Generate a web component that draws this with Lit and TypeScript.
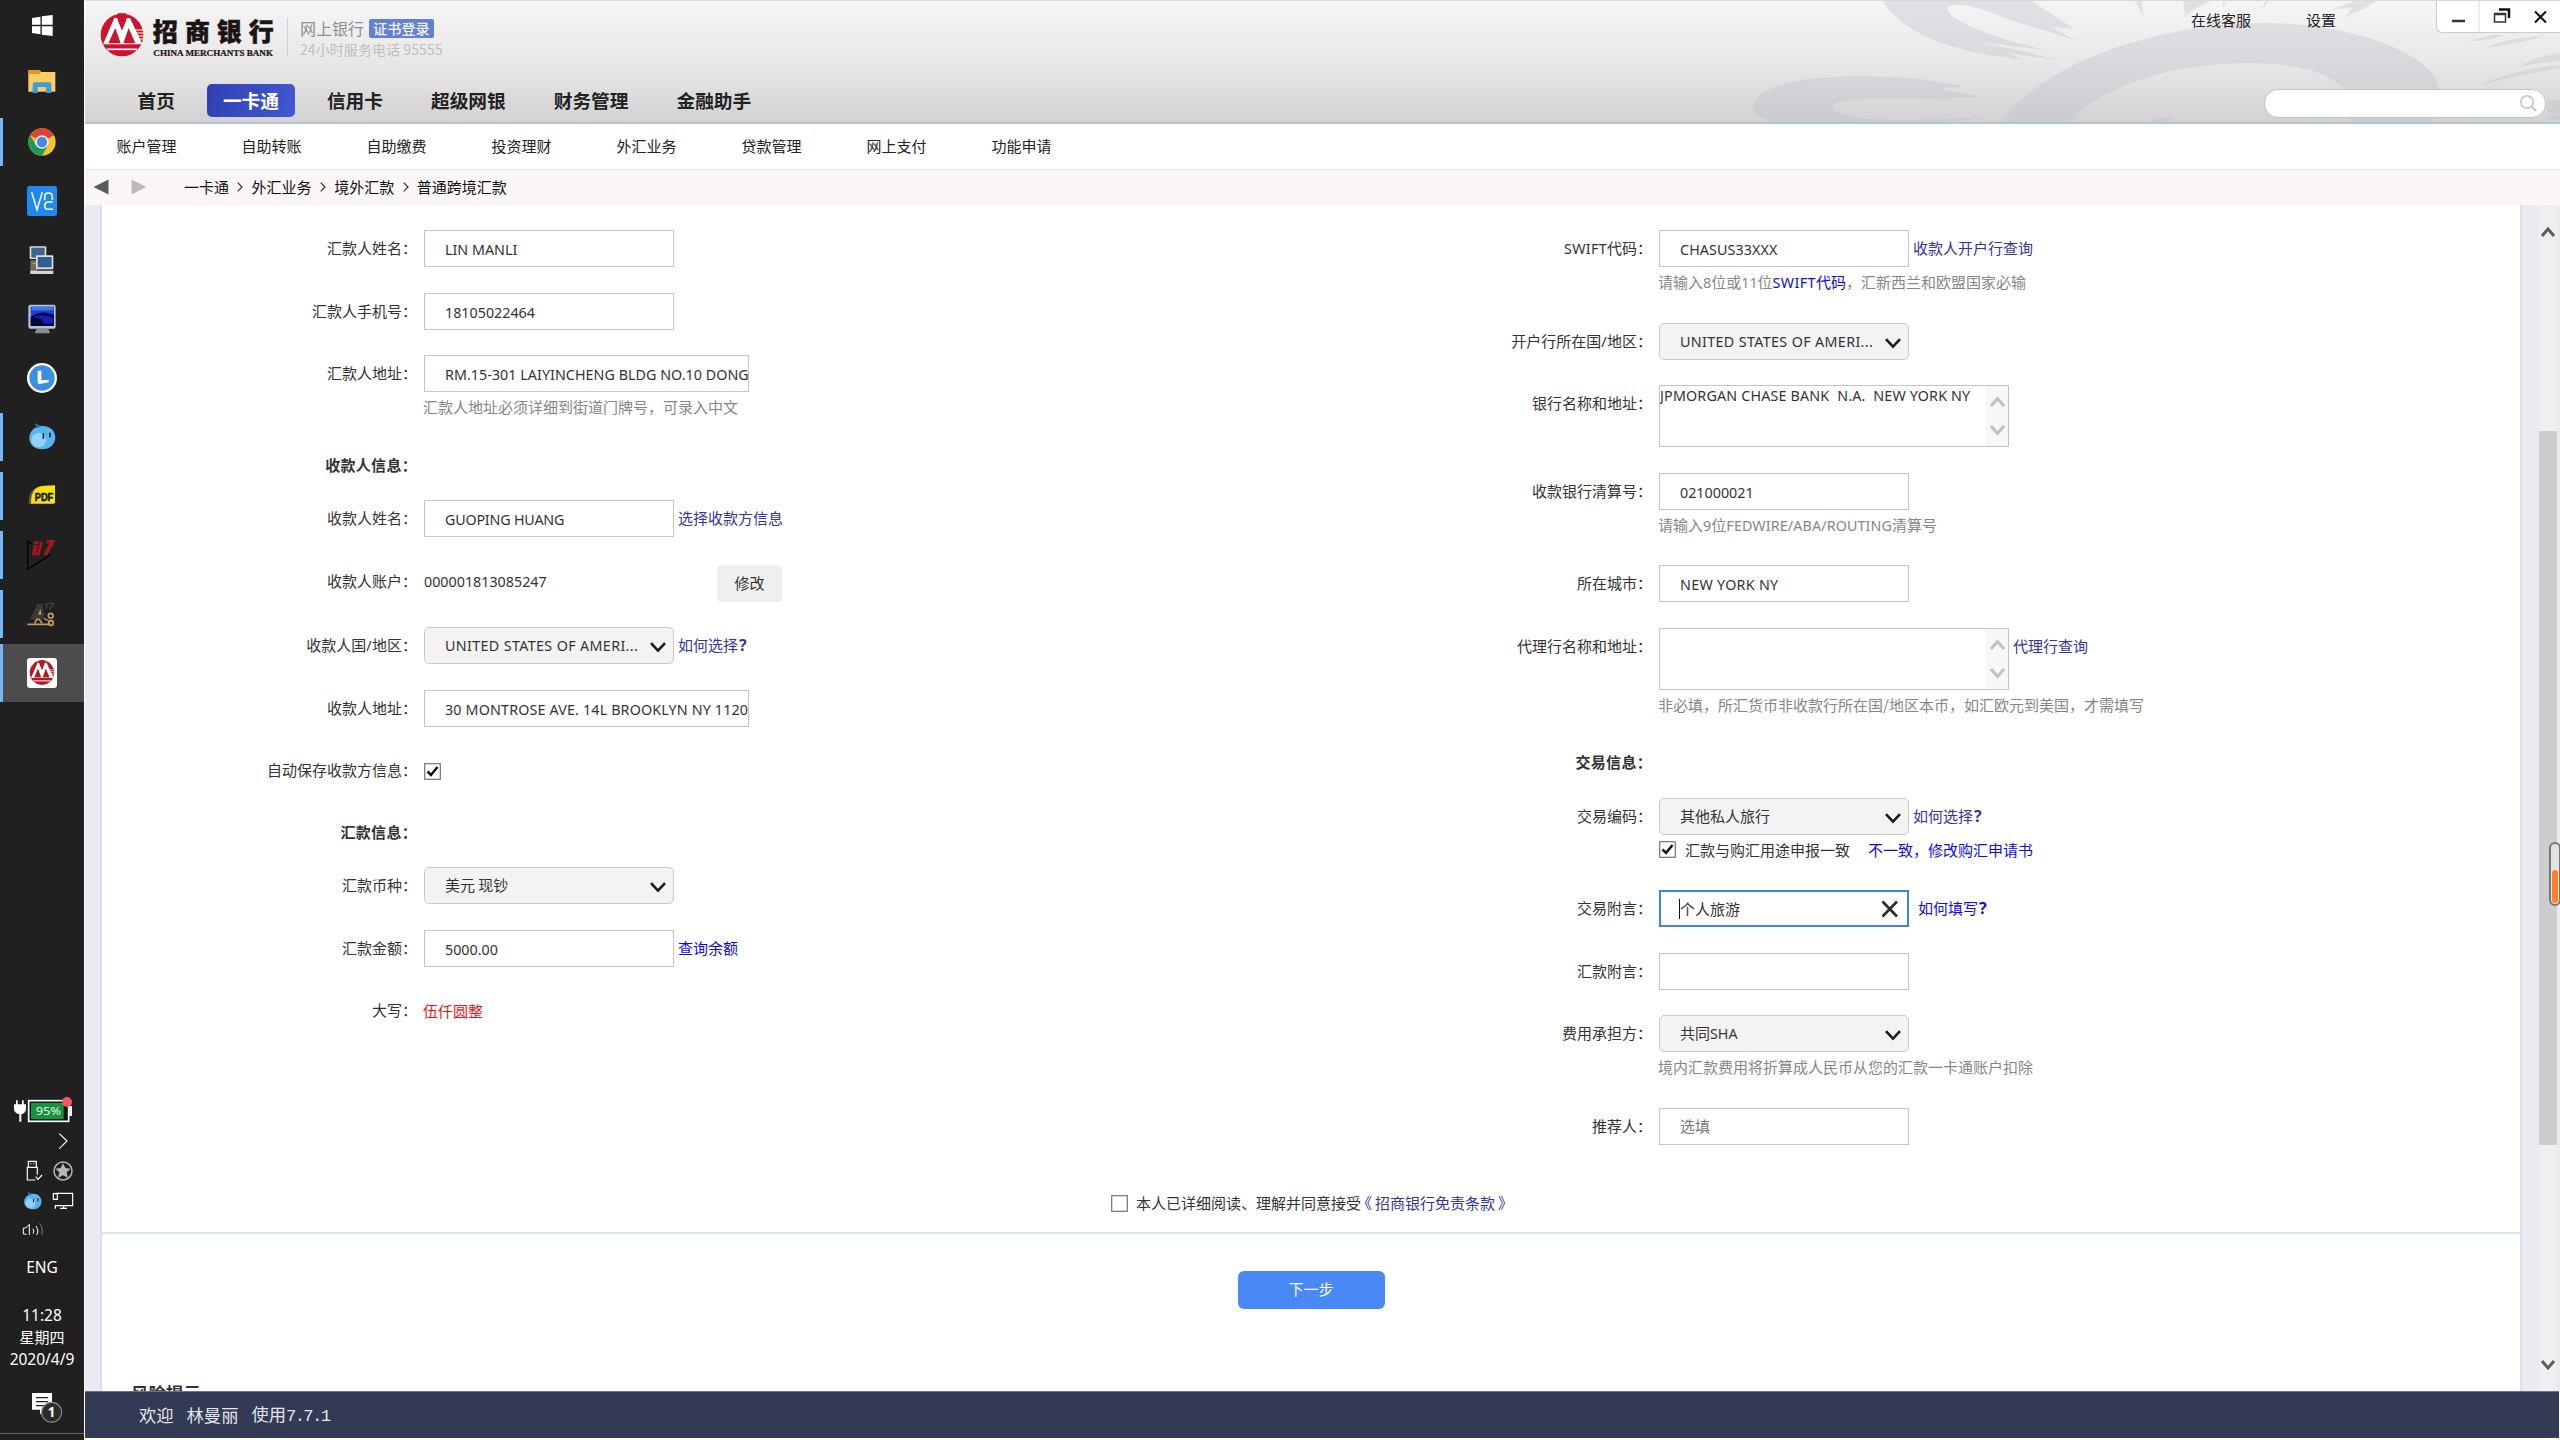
import { LitElement, html, svg, css, nothing } from "lit";
import { customElement, property } from "lit/decorators.js";
import { classMap } from "lit/directives/class-map.js";
import { styleMap } from "lit/directives/style-map.js";

const CJK = css`"Noto Sans CJK SC", sans-serif`;

/* Latin runs are set in a narrower face than the ideographs around them. */
const mix = (text: string, track = 0) =>
  text
    .split(/([\x21-\x7e][\x20-\x7e]*)/)
    .filter((t) => t)
    .map((t) =>
      /^[\x21-\x7e]/.test(t)
        ? html`<span class=${classMap({ lat: true, ask: t === "?" })} style=${styleMap({ letterSpacing: `${track}px` })}>${t}</span>`
        : t
    );

const mixCss = css`
  .lat {
    font-family: "Noto Sans", "Noto Sans CJK SC", sans-serif;
    font-size: 14.3px;
    white-space: pre;
  }
  .ask { font-weight: 700; font-size: 16px; margin-left: 1px; }
`;

const bankMark = (color: string) => svg`
  <circle cx="365" cy="105" r="64" fill=${color}></circle>
  <path d="M308 133 L342 54 L351 54 L365 88 L379 54 L389 54 L426 133 Z" fill="#fff"></path>
  <path d="M324 130 L345 84 L361 130 Z M369 130 L385 84 L405 130 Z" fill=${color}></path>
  <path d="M352 60 L365 92 L378 60 L378 40 L352 40 Z" fill=${color}></path>
  <path d="M320 148 H410" stroke="#fff" stroke-width="5"></path>
  <path d="M402 90 H430 M406 99 H431 M410 108 H431 M414 117 H430" stroke="#fff" stroke-width="3"></path>`;

const genie = svg`
  <path d="M105 250 C112 256 120 258 128 258 C152 258 166 274 166 292 C166 314 148 328 127 328 C104 328 88 314 88 294 C88 280 96 268 110 262 Z" fill="#5bb4ee"></path>
  <ellipse cx="116" cy="300" rx="22" ry="22" fill="#a5dcfa" opacity=".75"></ellipse>
  <path d="M105 250 C112 256 120 258 128 258 L110 264 Z" fill="#2a67b8"></path>
  <path d="M130 280 v16 M150 278 v14" stroke="#14284e" stroke-width="5"></path>`;

type Cell = { name: string; running?: boolean; active?: boolean; box: string; art: unknown };

/* Icon drawings share a 3x grid with the task bar cells. */
const TASKS: Cell[] = [
  { name: "explorer", box: "81 207 90 90", art: svg`
      <path d="M85 213 H119 L124 219 H166 V278 H85 Z" fill="#f9ce62"></path>
      <path d="M85 213 H119 L124 219 L119 225 H85 Z" fill="#dd9a1e"></path>
      <path d="M98 282 V256 Q98 250 104 250 H148 Q154 250 154 256 V282 H138 V264 H113 V282 Z" fill="#3f9bd8"></path>` },
  { name: "chrome", running: true, box: "81 381 90 90", art: svg`
      <circle cx="126" cy="426" r="41" fill="#fbc12e"></circle>
      <path d="M126 426 L90.500 405.500 A41 41 0 0 1 161.500 405.500 Z" fill="#dc4437"></path>
      <path d="M126 385 A41 41 0 0 1 161.500 405.500 H126 Z" fill="#dc4437"></path>
      <path d="M90.500 405.500 A41 41 0 0 0 126 467 L144 436 L108 436 Z" fill="#1a9b57"></path>
      <circle cx="126" cy="426" r="20" fill="#f4f4f4"></circle>
      <circle cx="126" cy="426" r="15.500" fill="#4a86ea"></circle>` },
  { name: "vnc", box: "81 558 90 90", art: svg`
      <rect x="81" y="558" width="90" height="90" rx="8" fill="#2088ee"></rect>
      <path d="M95 577 L111 629 L127 577 M134 601 V590 Q134 579 145 579 Q157 579 157 590 V600 M159 606 H146 Q134 606 134 617 Q134 628 146 628 H159" fill="none" stroke="#fff" stroke-width="4.500"></path>` },
  { name: "putty", box: "81 733 90 90", art: svg`
      <rect x="89" y="737" width="50" height="38" rx="3" fill="#dfe1dd"></rect>
      <rect x="94" y="741" width="40" height="30" fill="#3d6590"></rect>
      <path d="M91 779 H112 V818 H91 Z" fill="#6f6e59"></path>
      <rect x="108" y="764" width="52" height="42" rx="3" fill="#dfe1dd"></rect>
      <rect x="113" y="769" width="42" height="31" fill="#315e94"></rect>
      <path d="M91 810 H160 V820 H91 Z" fill="#d5d6ce"></path>
      <path d="M98 788 H106" stroke="#c8c27a" stroke-width="3"></path>` },
  { name: "remote", box: "81 911 90 90", art: svg`
      <rect x="85" y="913" width="82" height="72" rx="6" fill="#b9c0cf"></rect>
      <rect x="92" y="919" width="70" height="58" fill="#1f3fd6"></rect>
      <path d="M92 950 Q125 926 162 944 V977 H92 Z" fill="#06083c"></path>
      <path d="M100 950 Q126 938 160 952 V970 H132 L124 956 Z" fill="#1621b0"></path>
      <path d="M95 919 H160 V930 H95 Z" fill="#3f78f0"></path>
      <path d="M110 985 H145 L150 999 H104 Z" fill="#8c8f86"></path>` },
  { name: "lark", box: "81 69 90 90", art: svg`
      <circle cx="126" cy="114" r="45" fill="#fff"></circle>
      <circle cx="126" cy="114" r="38" fill="#3a8fe0"></circle>
      <path d="M113 92 H124 V121 L146 120 V127 L119 132 Q113 132 113 126 Z" fill="#fff"></path>` },
  { name: "genie", running: true, box: "81 246 90 90", art: genie },
  { name: "pdf", running: true, box: "81 424 90 90", art: svg`
      <path d="M86 492 Q84 452 118 439 L126 440 Q94 456 93 492 Z" fill="#5c5c5c"></path>
      <path d="M93 492 Q92 440 132 438 L165 437 V488 Q165 492 160 492 Z" fill="#f8e108"></path>
      <text x="104" y="484" font-family="Liberation Sans" font-weight="bold" font-size="34" textLength="56" lengthAdjust="spacingAndGlyphs" fill="#14140c" stroke="#14140c" stroke-width="1.500">PDF</text>` },
  { name: "cadence", running: true, box: "81 600 90 90", art: svg`
      <path d="M83 602 V688 L152 644" fill="none" stroke="#000" stroke-width="4"></path>
      <path d="M83 602 L95 612" stroke="#000" stroke-width="4"></path>
      <path d="M104 604 h14 l-3 8 h-14 Z M101 616 h13 l-6 22 h8 l-2 8 h-18 Z" fill="#a5161a"></path>
      <path d="M120 606 H129 L118 646 H110 Z M142 600 H166 L156 620 L142 645 H130 L148 610 H138 Z" fill="#a5161a"></path>` },
  { name: "solder", running: true, box: "81 777 90 90", art: svg`
      <path d="M90 838 L112 792 H128 L134 838 Z" fill="#3b3b3c"></path>
      <path d="M134 792 l8 0 l-4 14 M146 790 h16 l-14 18" stroke="#414141" fill="none" stroke-width="4"></path>
      <path d="M121 806 L115 824 H124 Z" fill="#c9a869"></path>
      <path d="M82 853 H152 M104 850 L110 838 H118 L126 850" stroke="#b99a5e" stroke-width="5" fill="none"></path>
      <circle cx="152" cy="827" r="7" fill="none" stroke="#c0a062" stroke-width="5"></circle>
      <circle cx="153" cy="849" r="7" fill="none" stroke="#c0a062" stroke-width="5"></circle>
      <path d="M132 836 L146 842" stroke="#b99a5e" stroke-width="4"></path>` },
  { name: "cmb", running: true, active: true, box: "81 954 90 90", art: svg`
      <rect x="81" y="954" width="90" height="90" rx="9" fill="#fff"></rect>
      <g transform="translate(-84 937.500) scale(.575)">${bankMark("#b01c22")}</g>` },
];

@customElement("task-bar")
export class TaskBar extends LitElement {
  static styles = css`
    :host { display: flex; flex-direction: column; width: 84px; height: 1440px; background: #202020; color: #fff; }
    .start { height: 54px; display: flex; justify-content: center; padding-top: 15px; box-sizing: border-box; }
    .cell { height: 59px; box-sizing: border-box; display: flex; align-items: center; justify-content: center; border-left: 3px solid transparent; padding-right: 3px; padding-bottom: 2px; }
    .cell.running { border-image: linear-gradient(transparent 5px, #74b7f2 5px, #74b7f2 53px, transparent 53px) 0 0 0 3; }
    .cell.active { background: #4c4c4c; border-image: none; border-left-color: #74b7f2; height: 58px; padding-bottom: 0; }
    .tray { margin-top: 393px; }
    svg { display: block; flex: none; }
    .lang { margin-top: 21px; text-align: center; font: 15.5px/22px "Noto Sans", sans-serif; }
    .clock { margin-top: 26px; text-align: center; font: 15.5px/22px "Noto Sans", "Noto Sans CJK SC", sans-serif; }
    .clock div { height: 22px; line-height: 22px; }
    .clock .day { font-family: ${CJK}; font-size: 15px; }
    .note { margin-top: 22px; }
    .edge { margin-top: 7px; border-top: 1px solid #6a6a6a; }
  `;
  render() {
    return html`
      <div class="start">
        <svg width="21" height="21" viewBox="0 0 62 62"><path d="M0 9 L25 5 V29 H0 Z M29 4 L61 0 V29 H29 Z M0 33 H25 V57 L0 53 Z M29 33 H61 V62 L29 58 Z" fill="#fff"></path></svg>
      </div>
      ${TASKS.map((t) => html`
        <div class=${classMap({ cell: true, running: !!t.running, active: !!t.active })}>
          <svg width="30" height="30" viewBox=${t.box}>${t.art}</svg>
        </div>`)}
      <svg class="tray" width="84" height="140" viewBox="0 45 252 420">
        <path d="M48 61 h5 v12 h13 v-12 h5 v12 h7 v14 q0 12 -14 16 v22 h-6 v-22 q-16 -4 -16 -16 v-14 h6 Z" fill="#fff"></path>
        <rect x="86" y="62" width="120" height="62" fill="#0c1a10" stroke="#fff" stroke-width="5"></rect>
        <rect x="93" y="69" width="98" height="48" fill="#16933e"></rect>
        <rect x="208" y="78" width="8" height="30" fill="#fff"></rect>
        <text x="107" y="105" font-family="Noto Sans" font-size="34" textLength="76" lengthAdjust="spacingAndGlyphs" fill="#e9f4ea">95%</text>
        <circle cx="201" cy="66" r="15" fill="#f0585d"></circle>
        <g fill="none" stroke="#fff" stroke-width="3.500">
          <path d="M178 161 L201 183 L178 206"></path>
          <path d="M85 262 V244 H109 V262 M106 300 H82 V262 H112 V284 M91 251 h3 M100 251 h3 M107 290 L114 298 L126 285"></path>
          <path d="M166 340 H218 V377 H166 V386 M160 341 H172 V358 H160 Z M191 378 V384 M180 385 H201"></path>
        </g>
        <g fill="none" stroke="#fff" stroke-width="3">
          <path d="M70 444 H77 L88 433 V473 L77 462 H70 Z M99 446 Q104 453 99 461 M108 438 Q119 453 108 469"></path>
          <path d="M119 430 Q135 453 119 479" stroke="#777"></path>
        </g>
        <circle cx="189" cy="273" r="27" fill="none" stroke="#b5b5b5" stroke-width="4.500"></circle>
        <path d="M189 249 L196 264 L212 266 L200 277 L204 294 L189 286 L174 294 L178 277 L166 266 L182 264 Z" fill="#b5b5b5"></path>
        <g transform="translate(14 170) scale(.665)">${genie}</g>
      </svg>
      <div class="lang">ENG</div>
      <div class="clock"><div>11:28</div><div class="day">星期四</div><div>2020/4/9</div></div>
      <svg class="note" width="84" height="34" viewBox="0 939 252 102">
        <path d="M96 942 H156 V992 H137 L120 1006 V992 H96 Z" fill="#fff"></path>
        <path d="M108 956 H144 M108 968 H144 M108 980 H132" stroke="#202020" stroke-width="3.500"></path>
        <circle cx="155" cy="1000" r="30" fill="#2b2b2b" stroke="#8d8d8d" stroke-width="3.500"></circle>
        <text x="155" y="1014" text-anchor="middle" font-family="Noto Sans" font-weight="bold" font-size="40" fill="#fff">1</text>
      </svg>
      <div class="edge"></div>`;
  }
}

@customElement("bank-header")
export class BankHeader extends LitElement {
  static styles = css`
    :host { display: block; font: 15px/20px ${CJK}; color: #222; }
    .top { position: relative; height: 124px; box-sizing: border-box; border-top: 1px solid #d9d9d9; border-bottom: 2px solid #b4c3d0; background: linear-gradient(#f5f5f5, #e8e8e8 50%, #d2d2d2); overflow: hidden; display: flex; flex-direction: column; }
    .art { position: absolute; right: 0; top: 0; }
    .brandrow { display: flex; height: 70px; position: relative; }
    .logo { margin: 11px 0 0 15px; flex: none; }
    .rule { width: 1px; height: 39px; margin: 17px 12px 0 12px; background: #d2d2d2; }
    .brand { padding-top: 17px; display: flex; flex-direction: column; color: #8f8f8f; font-size: 16px; }
    .line { display: flex; align-items: center; height: 20px; gap: 5px; white-space: nowrap; }
    .badge { height: 19px; line-height: 18px; padding: 0 4px; background: #6381d3; color: #f2f5fc; font-size: 14.200px; font-weight: 500; border-radius: 2px; }
    .phone { color: #bebebe; font-size: 14.100px; line-height: 22px; height: 22px; white-space: nowrap; }
    .tools { margin-left: auto; display: flex; }
    .tool { margin-top: 9px; width: 60px; margin-right: 55px; white-space: nowrap; }
    .tool.set { width: 30px; margin-right: 100px; }
    .win { height: 32px; width: 124px; box-sizing: border-box; background: #fff; border: 1px solid #ccc; border-top: 0; border-right: 0; border-radius: 0 0 0 6px; }
    .mainrow { display: flex; align-items: center; position: relative; height: 50px; padding: 9px 0 0 36.500px; box-sizing: border-box; }
    .nav { display: flex; gap: 16px; height: 33px; }
    .item { padding: 0 16px; height: 33px; line-height: 31px; font-size: 18.700px; font-weight: 700; border-radius: 5px; white-space: nowrap; }
    .item.on { color: #fff; background: linear-gradient(100deg, #3240b5, #4058cf); }
    .search { margin: 5px 14px 0 auto; width: 282px; height: 29px; box-sizing: border-box; background: #fff; border: 1px solid #c3c3c5; border-radius: 14px; display: flex; align-items: center; justify-content: flex-end; padding-right: 7px; }
    .sub { height: 45px; box-sizing: border-box; padding-bottom: 2px; background: #fff; display: grid; grid-template-columns: repeat(8, 125px); padding-left: 31.500px; align-items: center; }
    .crumbs { height: 36px; box-sizing: border-box; border-top: 1px solid #ebe3e2; background: #faf6f5; display: flex; align-items: center; color: #111; padding: 0 0 1px 8px; white-space: nowrap; }
    .arrow { flex: none; margin-right: 22px; }
    .arrow.next { margin-right: 37px; }
    .sep { width: 22.600px; flex: none; display: flex; justify-content: center; }
  `;
  render() {
    const nav = ["首页", "一卡通", "信用卡", "超级网银", "财务管理", "金融助手"];
    const sub = ["账户管理", "自助转账", "自助缴费", "投资理财", "外汇业务", "贷款管理", "网上支付", "功能申请"];
    const crumbs = ["一卡通", "外汇业务", "境外汇款", "普通跨境汇款"];
    return html`
      <div class="top">
        <svg class="art" width="840" height="122" viewBox="0 0 1568 366" preserveAspectRatio="none">
          <g fill="#b9bfcb" fill-opacity=".36">
            <path d="M303 0 C330 70 400 150 565 175 L535 155 L628 178 L570 152 L480 122 L610 148 C530 120 420 60 425 20 C432 0 480 15 530 50 C570 75 620 90 668 122 L620 78 L661 83 L582 0 Z"></path>
            <path d="M61 320 C66 250 160 226 270 226 C350 228 410 240 455 258 L410 262 L487 288 L425 290 L430 297 C330 290 230 290 212 308 C196 335 240 355 330 357 C400 358 450 350 490 350 C440 362 400 364 360 368 L110 368 C80 355 62 340 61 320 Z"></path>
            <path d="M525 368 C600 180 830 66 1010 66 C1200 66 1338 170 1342 266 L1330 368 L1180 368 L1165 262 C1130 205 1060 186 985 186 C820 190 700 270 648 368 Z"></path>
            <path d="M797 368 Q820 348 843 350 L835 368 Z"></path>
            <path d="M775 0 L790 45 L787 0 Z M865 0 L868 50 C875 30 890 22 915 0 Z M940 0 L937 20 L945 5 Z M1018 0 L1012 26 L1024 0 Z"></path>
            <path d="M1185 0 L1140 26 L1180 20 L1165 52 C1180 35 1205 25 1225 0 Z"></path>
            <path d="M1395 122 L1440 102 L1465 102 Q1430 120 1395 122 Z M1430 139 Q1470 112 1535 106 Q1490 130 1430 139 Z M1490 197 Q1520 170 1568 156 V180 Q1530 184 1490 197 Z M1415 254 Q1480 205 1568 191 V202 Q1500 218 1415 254 Z M1545 296 H1568 V338 L1545 332 Z M1545 348 L1568 342 V356 L1545 354 Z"></path>
          </g>
        </svg>
        <div class="brandrow">
          <svg class="logo" width="175" height="50" viewBox="299 36 525 150">
            ${bankMark("#c9152e")}
            <text x="457 554 649 745" y="123" font-family="Noto Sans CJK SC" font-weight="900" font-size="75" fill="#1c1414" stroke="#1c1414" stroke-width="1.500">招商银行</text>
            <text x="459" y="167" font-family="Liberation Serif" font-weight="bold" font-size="25" textLength="359" lengthAdjust="spacingAndGlyphs" fill="#1c1414" stroke="#1c1414" stroke-width=".6">CHINA MERCHANTS BANK</text>
          </svg>
          <div class="rule"></div>
          <div class="brand">
            <div class="line">网上银行<span class="badge">证书登录</span></div>
            <div class="phone">24小时服务电话 95555</div>
          </div>
          <div class="tools">
            <div class="tool">在线客服</div>
            <div class="tool set">设置</div>
            <svg class="win" viewBox="0 0 123 31">
              <path d="M42 0 V31" stroke="#ddd"></path>
              <path d="M15 20 H28" stroke="#333" stroke-width="2.500"></path>
              <path d="M57.500 12.500 H68.500 V21 H57.500 Z M57 13.500 H69" fill="none" stroke="#333" stroke-width="1.500"></path>
              <path d="M62 8.500 H72 V17" fill="none" stroke="#111" stroke-width="2.500"></path>
              <path d="M98 10.500 L109 21.500 M109 10.500 L98 21.500" stroke="#111" stroke-width="2"></path>
            </svg>
          </div>
        </div>
        <div class="mainrow">
          <div class="nav">${nav.map((n, i) => html`<div class=${classMap({ item: true, on: i === 1 })}>${n}</div>`)}</div>
          <div class="search">
            <svg width="20" height="20" viewBox="0 0 20 20"><circle cx="9" cy="9" r="6.200" fill="none" stroke="#c4c4c4" stroke-width="1.600"></circle><path d="M13.500 13.500 L18 18" stroke="#c4c4c4" stroke-width="2"></path></svg>
          </div>
        </div>
      </div>
      <div class="sub">${sub.map((s) => html`<div>${s}</div>`)}</div>
      <div class="crumbs">
        <svg class="arrow" width="16" height="16" viewBox="0 0 16 16"><path d="M15.500 .5 V15.500 L.5 8 Z" fill="#5a5a5a"></path></svg>
        <svg class="arrow next" width="16" height="16" viewBox="0 0 16 16"><path d="M.5 .5 V15.500 L15.500 8 Z" fill="#bdbab9"></path></svg>
        ${crumbs.map((c, i) => html`${i ? html`<span class="sep"><svg width="6" height="10" viewBox="0 0 6 10"><path d="M.7 .7 L5 5 L.7 9.300" fill="none" stroke="#333" stroke-width="1.200"></path></svg></span>` : nothing}<span>${c}</span>`)}
      </div>`;
  }
}

type Field = {
  label: string;
  kind: "input" | "select" | "area" | "text" | "check" | "head" | "amount";
  value?: string;
  track?: number;
  wide?: boolean;
  focus?: boolean;
  ghost?: boolean;
  link?: string;
  bright?: boolean;
  button?: string;
  hint?: unknown;
};

const tick = (on: boolean) => html`<svg class="tickmark" width="17" height="17" viewBox="0 0 17 17">
  <rect x=".75" y=".75" width="15.500" height="15.500" fill="#fff" stroke="#555"></rect>
  ${on ? svg`<path d="M3.500 8.500 L7 12 L13.500 4" fill="none" stroke="#111" stroke-width="2.500"></path>` : nothing}
</svg>`;

@customElement("form-row")
export class FormRow extends LitElement {
  @property({ attribute: false }) field!: Field;
  static styles = [mixCss, css`
    :host { display: block; font: 15px/20px ${CJK}; color: #333; }
    .tickmark { display: block; flex: none; }
    .row { display: flex; height: 62.500px; }
    .row.hinted { height: 92.500px; }
    .row.area { height: 87.500px; }
    .row.area.hinted { height: 117.500px; }
    .row.text { height: 64.500px; }
    .row.head { height: 52.500px; }
    .label { width: 315px; flex: none; padding-right: 7px; line-height: 35px; text-align: right; white-space: nowrap; }
    .head .label { font-weight: 700; letter-spacing: .3px; line-height: 34px; }
    .line { display: flex; }
    .box { width: 250px; height: 37px; box-sizing: border-box; border: 1px solid #c5c5c5; background: #fff; padding: 0 0 0 20px; line-height: 36px; overflow: hidden; white-space: nowrap; display: flex; flex: none; }
    .box.wide { width: 325px; }
    .box.dropdown { background: #f3f3f3; border-radius: 5px; border-color: #c9c9c9; justify-content: space-between; padding-right: 7px; line-height: 34px; }
    .dropdown svg { margin-top: 14px; }
    .box.focus { border: 2px solid #3c86e2; padding: 0 8px 0 18px; justify-content: space-between; }
    .focus .val { border-left: 1px solid #111; height: 20px; line-height: 19px; margin-top: 7px; }
    .focus svg { margin-top: 8px; }
    .box.ghost { color: #777; line-height: 34px; }
    .box.areabox { width: 350px; height: 62px; line-height: 18px; padding: 0; justify-content: space-between; }
    .rail { width: 22px; background: #f7f7f7; display: flex; flex-direction: column; align-items: center; justify-content: space-between; padding: 10px 0 10px; box-sizing: border-box; }
    .link { margin-left: 4px; line-height: 35px; color: #2f36a2; white-space: nowrap; }
    .link.bright { color: #0c0ce6; }
    .focus + .link { margin-left: 9px; }
    .hint { color: #868686; line-height: 20px; margin: 5px 0 0 -1px; white-space: nowrap; display: flex; align-items: center; }
    .hint .declare { margin-left: 9px; color: #333; }
    .hint .revise { margin-left: 18px; }
    .hint .revise, .hint .term { color: #0c0ce6; }
    .hint .tickmark { margin-left: 1px; }
    .plain { line-height: 36px; width: 293px; }
    .red { color: #ee1111; line-height: 37px; margin-left: -1px; }
    .btn { width: 65px; height: 37px; line-height: 35px; background: #efefef; border-radius: 4px; text-align: center; margin-top: 2px; }
    .tick { margin-top: 11px; }
  `];

  private control(f: Field) {
    const value = mix(f.value ?? "", f.track);
    switch (f.kind) {
      case "input":
        return html`<div class=${classMap({ box: true, wide: !!f.wide, focus: !!f.focus, ghost: !!f.ghost })}>
          <span class="val">${value}</span>
          ${f.focus ? html`<svg width="18" height="18" viewBox="0 0 18 18"><path d="M1.500 1.500 L16 16.500 M16 1.500 L1.500 16.500" stroke="#2c2c2c" stroke-width="2.600"></path></svg>` : nothing}
        </div>`;
      case "select":
        return html`<div class="box dropdown"><span class="val">${value}</span>
          <svg width="16" height="11" viewBox="0 0 16 11"><path d="M1 1.200 L8 8.600 L15 1.200" fill="none" stroke="#1c1c1c" stroke-width="2.600"></path></svg></div>`;
      case "area":
        return html`<div class="box areabox"><span>${value}</span>
          <div class="rail">
            <svg width="15" height="12" viewBox="0 0 15 12"><path d="M1 10 L7.500 2.500 L14 10" fill="none" stroke="#c1c1c1" stroke-width="3"></path></svg>
            <svg width="15" height="12" viewBox="0 0 15 12"><path d="M1 2 L7.500 9.500 L14 2" fill="none" stroke="#c1c1c1" stroke-width="3"></path></svg>
          </div></div>`;
      case "text":
        return html`<div class="plain">${value}</div>`;
      case "amount":
        return html`<div class="red">${f.value}</div>`;
      case "check":
        return html`<div class="tick">${tick(true)}</div>`;
      default:
        return nothing;
    }
  }

  render() {
    const f = this.field;
    return html`<div class=${classMap({ row: true, [f.kind]: true, hinted: !!f.hint })}>
      <div class="label">${mix(f.label, 0.3)}</div>
      <div>
        <div class="line">
          ${this.control(f)}
          ${f.link ? html`<span class=${classMap({ link: true, bright: !!f.bright })}>${mix(f.link)}</span>` : nothing}
          ${f.button ? html`<div class="btn">${f.button}</div>` : nothing}
        </div>
        ${f.hint ? html`<div class="hint">${f.hint}</div>` : nothing}
      </div>
    </div>`;
  }
}

const LEFT: Field[] = [
  { label: "汇款人姓名：", kind: "input", value: "LIN MANLI" },
  { label: "汇款人手机号：", kind: "input", value: "18105022464" },
  { label: "汇款人地址：", kind: "input", wide: true, track: 0.04, value: "RM.15-301 LAIYINCHENG BLDG NO.10 DONG", hint: "汇款人地址必须详细到街道门牌号，可录入中文" },
  { label: "收款人信息：", kind: "head" },
  { label: "收款人姓名：", kind: "input", track: -0.2, value: "GUOPING HUANG", link: "选择收款方信息" },
  { label: "收款人账户：", kind: "text", value: "000001813085247", button: "修改" },
  { label: "收款人国/地区：", kind: "select", track: 0.36, value: "UNITED STATES OF AMERI...", link: "如何选择?" },
  { label: "收款人地址：", kind: "input", wide: true, track: 0.16, value: "30 MONTROSE AVE. 14L BROOKLYN NY 1120" },
  { label: "自动保存收款方信息：", kind: "check" },
  { label: "汇款信息：", kind: "head" },
  { label: "汇款币种：", kind: "select", value: "美元 现钞" },
  { label: "汇款金额：", kind: "input", value: "5000.00", link: "查询余额", bright: true },
  { label: "大写：", kind: "amount", value: "伍仟圆整" },
];

const RIGHT: Field[] = [
  { label: "SWIFT代码：", kind: "input", track: 0.1, value: "CHASUS33XXX", link: "收款人开户行查询", hint: html`<span>${mix("请输入8位或11位")}<span class="term">${mix("SWIFT代码", 0.4)}</span>，汇新西兰和欧盟国家必输</span>` },
  { label: "开户行所在国/地区：", kind: "select", track: 0.36, value: "UNITED STATES OF AMERI..." },
  { label: "银行名称和地址：", kind: "area", track: 0.17, value: "JPMORGAN CHASE BANK  N.A.  NEW YORK NY" },
  { label: "收款银行清算号：", kind: "input", value: "021000021", hint: html`<span>${mix("请输入9位FEDWIRE/ABA/ROUTING清算号", 0.12)}</span>` },
  { label: "所在城市：", kind: "input", track: 0.3, value: "NEW YORK NY" },
  { label: "代理行名称和地址：", kind: "area", link: "代理行查询", hint: "非必填，所汇货币非收款行所在国/地区本币，如汇欧元到美国，才需填写" },
  { label: "交易信息：", kind: "head" },
  { label: "交易编码：", kind: "select", value: "其他私人旅行", link: "如何选择?", hint: html`${tick(true)}<span class="declare">汇款与购汇用途申报一致</span><span class="revise">不一致，修改购汇申请书</span>` },
  { label: "交易附言：", kind: "input", focus: true, value: "个人旅游", link: "如何填写?", bright: true },
  { label: "汇款附言：", kind: "input" },
  { label: "费用承担方：", kind: "select", value: "共同SHA", hint: "境内汇款费用将折算成人民币从您的汇款一卡通账户扣除" },
  { label: "推荐人：", kind: "input", ghost: true, value: "选填" },
];

@customElement("app-root")
export class AppRoot extends LitElement {
  static styles = css`
    :host { display: flex; width: 2560px; height: 1440px; overflow: hidden; background: #fff; position: relative; font: 15px/20px ${CJK}; color: #333; }
    .tickmark { display: block; flex: none; }
    .window { flex: 1; min-width: 0; display: flex; flex-direction: column; padding-left: 1px; background: #fff; }
    .body { flex: 1; min-height: 0; display: flex; background: #e9ebf1; }
    .panel { margin-left: 15px; width: 2422px; box-sizing: border-box; border: solid #d9e0ee; border-width: 0 2px; background: #fff; overflow: hidden; }
    .form { height: 1027px; box-sizing: border-box; display: flex; flex-direction: column; padding-top: 25px; }
    .cols { display: grid; grid-template-columns: 1235px 1fr; flex: 1; min-height: 0; }
    .agree { display: flex; align-items: center; height: 20px; padding-left: 1009px; margin-bottom: 19px; white-space: nowrap; }
    .agree span { margin-left: 8px; }
    .agree .terms { margin-left: -4px; color: #2f36a2; display: flex; gap: 3px; }
    .terms b { font-weight: 400; }
    .actions { border-top: 2px solid #dbe2f0; padding-top: 37px; display: flex; flex-direction: column; }
    .next { align-self: center; width: 147px; height: 38px; line-height: 36px; background: #4888f7; color: #fff; border-radius: 6px; text-align: center; }
    .risk { margin: 72px 0 0 29px; font-size: 17.500px; line-height: 24px; font-weight: 700; }
    .bar { margin-left: auto; margin-right: 3px; width: 18px; background: #efefef; display: flex; flex-direction: column; align-items: center; }
    .up { margin-top: 21px; }
    .thumb { width: 18px; height: 714px; margin-top: 193px; background: #cdcdcd; }
    .down { margin-top: 214px; }
    .status { height: 47px; margin: 0 1px 2px 0; box-sizing: border-box; border-top: 1px solid #6d7386; background: #333a54; color: #e2e5ee; display: flex; gap: 13px; align-items: center; padding-left: 54px; font-size: 17.300px; }
    .ver { font-family: "Liberation Mono", monospace; letter-spacing: -1.700px; }
    .gauge { position: absolute; left: 2549px; top: 842px; width: 12px; height: 64px; box-sizing: border-box; border: 2px solid #777; border-radius: 6px; background: #e2e2e2; display: flex; flex-direction: column; justify-content: flex-end; padding: 1px; }
    .level { height: 33px; background: #ff8124; border-radius: 3px; }
  `;
  render() {
    return html`
      <task-bar></task-bar>
      <div class="window">
        <bank-header></bank-header>
        <div class="body">
          <div class="panel">
            <div class="form">
              <div class="cols">
                <div>${LEFT.map((f) => html`<form-row .field=${f}></form-row>`)}</div>
                <div>${RIGHT.map((f) => html`<form-row .field=${f}></form-row>`)}</div>
              </div>
              <div class="agree">${tick(false)}<span>本人已详细阅读、理解并同意接受</span><span class="terms"><b>《</b><b>招商银行免责条款</b><b>》</b></span></div>
            </div>
            <div class="actions">
              <div class="next">下一步</div>
              <div class="risk">风险提示</div>
            </div>
          </div>
          <div class="bar">
            <svg class="up" width="14" height="12" viewBox="0 0 14 12"><path d="M1 10 L7 3 L13 10" fill="none" stroke="#5e5e5e" stroke-width="3"></path></svg>
            <div class="thumb"></div>
            <svg class="down" width="14" height="12" viewBox="0 0 14 12"><path d="M1 2 L7 9 L13 2" fill="none" stroke="#5e5e5e" stroke-width="3"></path></svg>
          </div>
        </div>
        <div class="status"><span>欢迎</span><span>林曼丽</span><span>使用<span class="ver">7.7.1</span></span></div>
      </div>
      <div class="gauge"><div class="level"></div></div>`;
  }
}
